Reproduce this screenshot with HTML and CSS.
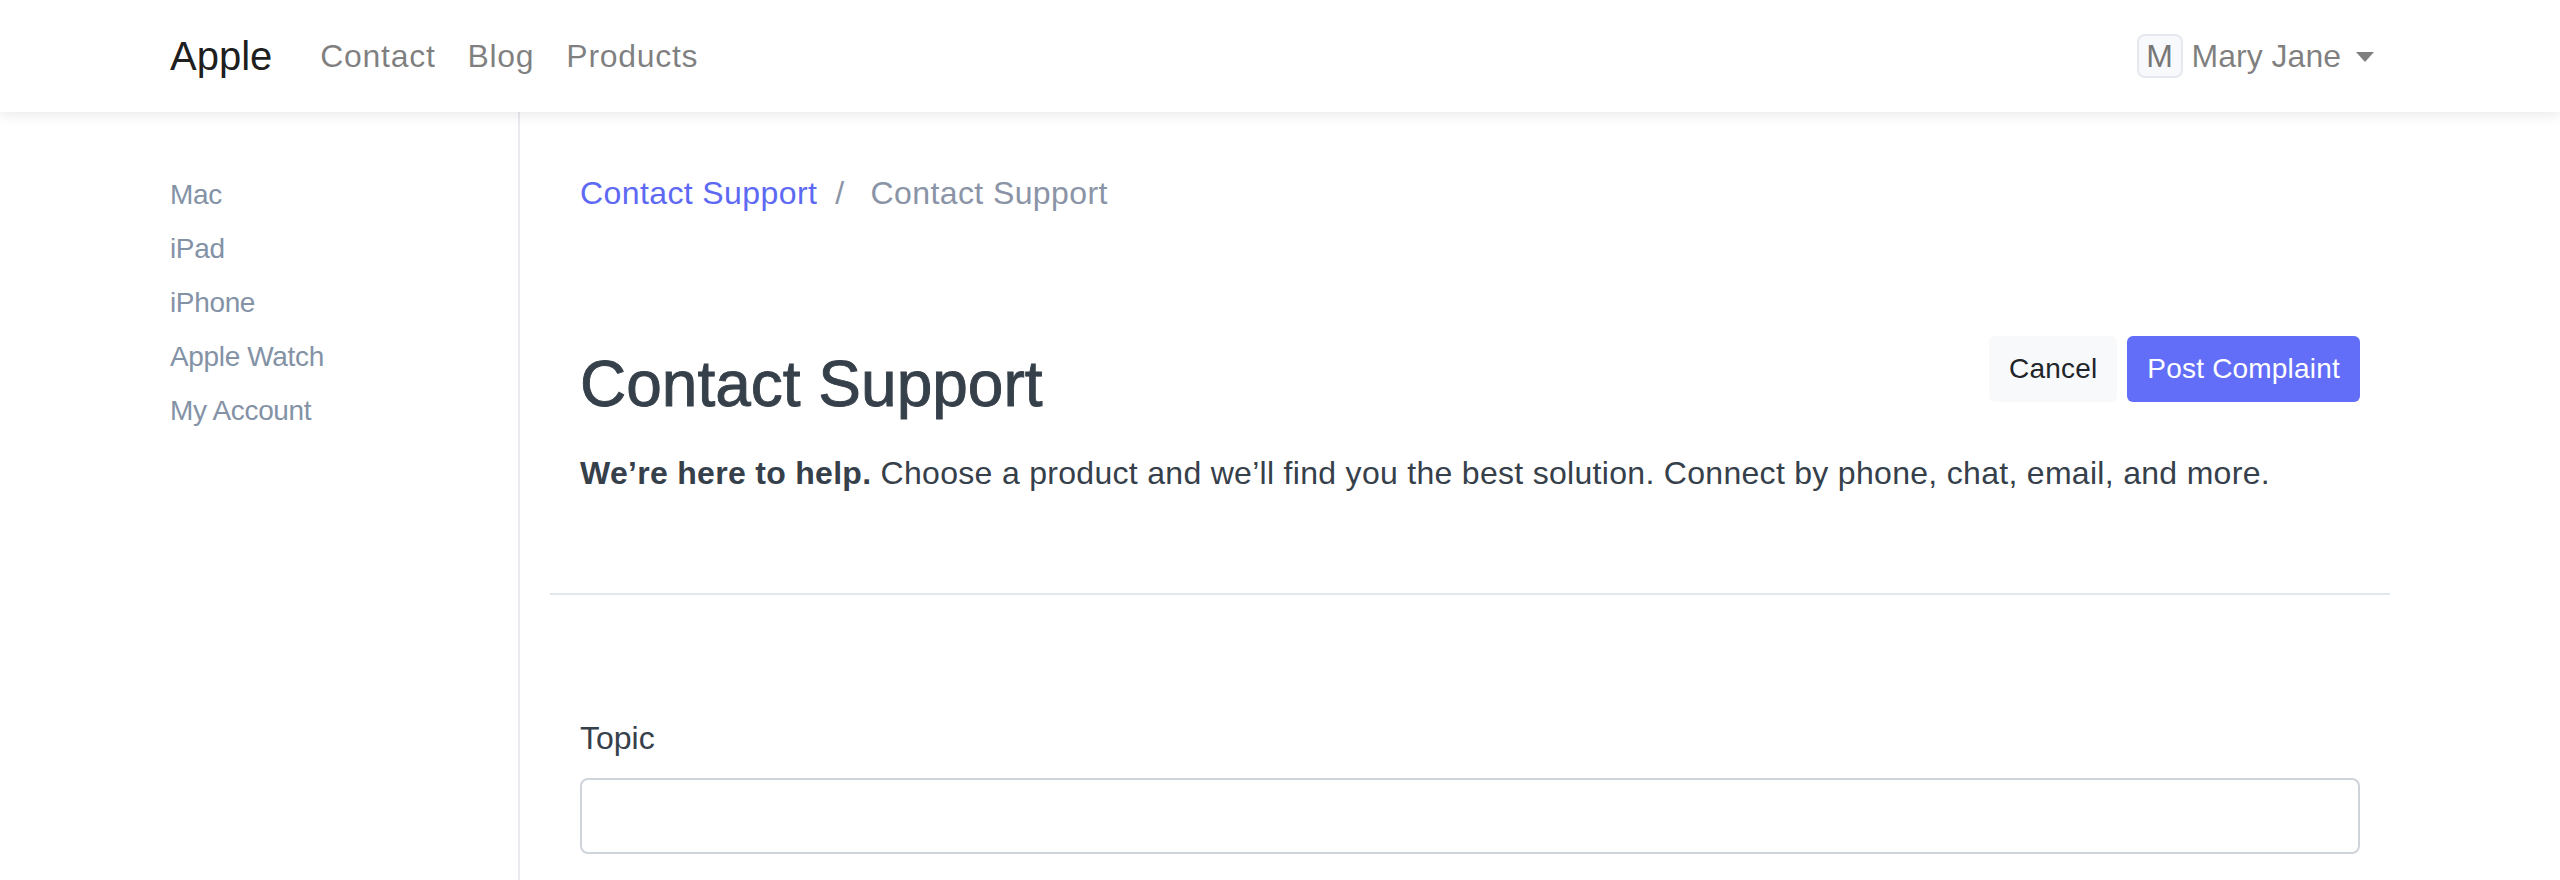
FILE: index.html
```html
<!DOCTYPE html>
<html lang="en">
<head>
<meta charset="utf-8">
<title>Contact Support</title>
<link rel="stylesheet" href="styles.css">
</head>
<body>
<header class="navbar">
  <div class="container nav-inner">
    <a class="brand" href="#">Apple</a>
    <ul class="nav-links">
      <li><a href="#">Contact</a></li>
      <li><a href="#">Blog</a></li>
      <li><a href="#">Products</a></li>
    </ul>
    <div class="user">
      <span class="avatar">M</span>
      <span class="user-name">Mary Jane</span>
      <span class="caret"></span>
    </div>
  </div>
</header>
<div class="container page">
  <aside class="sidebar">
    <ul class="side-nav">
      <li><a href="#">Mac</a></li>
      <li><a href="#">iPad</a></li>
      <li><a href="#">iPhone</a></li>
      <li><a href="#">Apple Watch</a></li>
      <li><a href="#">My Account</a></li>
    </ul>
  </aside>
  <main class="main">
    <div class="main-pad">
      <nav class="breadcrumb">
        <a href="#" class="crumb-link">Contact Support</a>
        <span class="crumb-sep">/</span>
        <span class="crumb-active">Contact Support</span>
      </nav>
      <div class="title-row">
        <h2 class="title">Contact Support</h2>
        <div class="actions">
          <button class="btn btn-light">Cancel</button>
          <button class="btn btn-primary">Post Complaint</button>
        </div>
      </div>
      <p class="lead"><strong>We’re here to help.</strong> Choose a product and we’ll find you the best solution. Connect by phone, chat, email, and more.</p>
    </div>
    <hr class="divider">
    <div class="main-pad form">
      <label class="label" for="topic">Topic</label>
      <input class="input" id="topic" type="text">
    </div>
  </main>
</div>
</body>
</html>
```

FILE: styles.css
```css
* { box-sizing: border-box; }
html, body { margin: 0; padding: 0; background: #fff; }
body {
  font-family: "Liberation Sans", Arial, sans-serif;
  font-size: 32px;
  line-height: 1.5;
  color: #212529;
}
a { text-decoration: none; }
ul { list-style: none; margin: 0; padding: 0; }

.container { width: 2280px; margin: 0 auto; padding: 0 30px; }

/* navbar */
.navbar {
  height: 112px;
  padding: 16px 32px;
  background: #fff;
  box-shadow: 0 4px 12px rgba(0, 0, 0, 0.08);
  position: relative;
  z-index: 2;
}
.nav-inner { display: flex; align-items: center; height: 80px; }
.brand { font-size: 40px; color: rgba(0, 0, 0, 0.9); margin-right: 32px; line-height: 60px; }
.nav-links { display: flex; }
.nav-links a { display: block; padding: 16px; color: rgba(0, 0, 0, 0.5); line-height: 48px; letter-spacing: 0.7px; }
.user { margin-left: auto; display: flex; align-items: center; padding: 0 16px; color: rgba(0, 0, 0, 0.5); }
.avatar {
  width: 46px; height: 44px;
  border: 2px solid #e6e8ef; border-radius: 8px; background: #f8f9fc;
  display: flex; align-items: center; justify-content: center;
  font-size: 32px; line-height: 1; color: #777;
  margin-right: 9px;
}
.user-name { line-height: 48px; }
.caret {
  width: 0; height: 0; margin-left: 15px; margin-top: 2px;
  border-top: 10px solid rgba(0, 0, 0, 0.5);
  border-left: 9px solid transparent; border-right: 9px solid transparent;
}

/* page */
.page { display: flex; padding: 0; min-height: 768px; }
.sidebar { width: 380px; padding: 56px 30px 0; border-right: 2px solid #e9ebef; flex: none; }
.side-nav a { display: block; font-size: 28px; line-height: 42px; padding: 6px 0; color: #8492a6; letter-spacing: -0.35px; }
.main { flex: 1; padding: 0 30px; }
.main-pad { padding: 0 30px; }

.breadcrumb { display: flex; align-items: center; padding-top: 57px; line-height: 48px; letter-spacing: 0.4px; }
.crumb-link { color: #5d68f3; }
.crumb-sep { color: #8a94a6; padding: 0 26px 0 18px; }
.crumb-active { color: #8a94a6; }

.title-row { display: flex; justify-content: space-between; align-items: flex-start; margin-top: 119px; }
.title {
  margin: 10px 0 0; font-size: 64px; font-weight: 400; line-height: 1.2; color: #36404a;
  -webkit-text-stroke: 0.9px #36404a;
}
.actions { display: flex; gap: 10px; }
.btn {
  font-family: inherit; font-size: 28px; line-height: 42px;
  padding: 10px 18px; border: 2px solid transparent; border-radius: 6px; cursor: pointer;
  letter-spacing: 0.2px;
}
.btn-light { background: #f8f9fa; color: #212529; }
.btn-primary { background: #626ef8; color: #fff; }

.lead { margin: 26px 0 0; color: #36404a; letter-spacing: 0.3px; }
.lead strong { font-weight: 700; }

.divider { border: 0; border-top: 2px solid #e2e8f0; margin: 96px 0 0; }

.form { padding-top: 119px; }
.label { display: block; color: #36404a; line-height: 48px; margin-bottom: 16px; }
.input {
  display: block; width: 100%; height: 76px;
  border: 2px solid #ced4da; border-radius: 8px; background: #fff;
  font-family: inherit; font-size: 32px; padding: 12px 24px;
}
```
